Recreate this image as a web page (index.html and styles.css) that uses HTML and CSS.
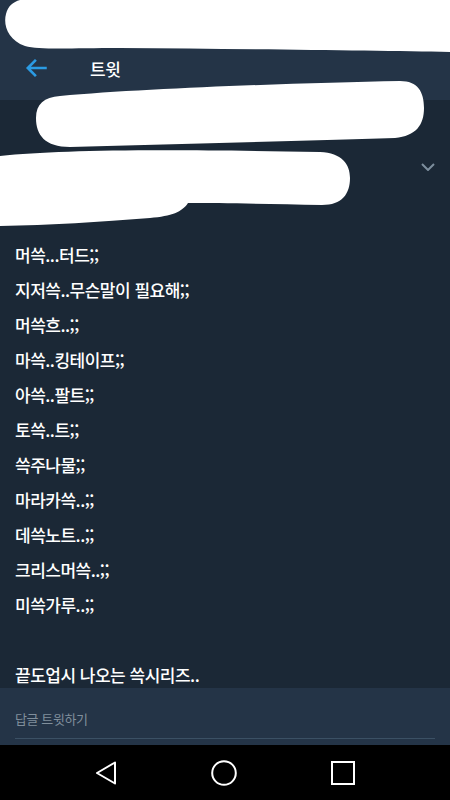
FILE: index.html
```html
<!DOCTYPE html>
<html lang="ko">
<head>
<meta charset="utf-8">
<title>트윗</title>
<link rel="stylesheet" href="styles.css">
</head>
<body>
<div class="screen">
  <header class="header">
    <div class="toolbar">
      <svg class="back" viewBox="0 0 24 24" width="26" height="26"><path d="M21 12H4M11 4.5L3.5 12 11 19.5" fill="none" stroke="#2b9be3" stroke-width="2.4" stroke-linecap="butt"/></svg>
      <span class="title">트윗</span>
    </div>
  </header>
  <main class="tweet">
    <div class="profile">
      <svg class="chevron" viewBox="0 0 14 8" width="14" height="8"><path d="M1 1l6 6 6-6" fill="none" stroke="#7d8e9d" stroke-width="2"/></svg>
    </div>
    <div class="text">
      <p class="line">머쓱...터드;;</p>
      <p class="line">지저쓱..무슨말이 필요해;;</p>
      <p class="line">머쓱흐..;;</p>
      <p class="line">마쓱..킹테이프;;</p>
      <p class="line">아쓱..팔트;;</p>
      <p class="line">토쓱..트;;</p>
      <p class="line">쓱주나물;;</p>
      <p class="line">마라카쓱..;;</p>
      <p class="line">데쓱노트..;;</p>
      <p class="line">크리스머쓱..;;</p>
      <p class="line">미쓱가루..;;</p>
      <p class="line"></p>
      <p class="line">끝도업시 나오는 쓱시리즈..</p>
    </div>
  </main>
  <div class="reply">
    <div class="reply-field">답글 트윗하기</div>
  </div>
  <nav class="navbar">
    <svg viewBox="0 0 24 26" width="24" height="26"><path d="M21 2.5L3 13l18 10.5z" fill="none" stroke="#fff" stroke-width="2" stroke-linejoin="round"/></svg>
    <svg viewBox="0 0 26 26" width="26" height="26"><circle cx="13" cy="13" r="11.8" fill="none" stroke="#fff" stroke-width="2"/></svg>
    <svg viewBox="0 0 26 26" width="26" height="26"><rect x="2" y="2" width="22" height="22" fill="none" stroke="#fff" stroke-width="2"/></svg>
  </nav>
  <svg class="scribble" viewBox="0 0 450 800" width="450" height="800">
    <path d="M20 0 H450 V52 C380 51 250 49 120 48 C70 48 40 50 25 46 C8 40 3 25 6 14 C8 6 13 2 20 0Z" fill="#fff"/>
    <path d="M60 96 C150 88 300 83 400 81 C418 81 424 92 424 108 C424 125 416 136 395 138 C300 141 180 144 70 147 C45 147 36 135 36 118 C36 104 44 97 60 96Z" fill="#fff"/>
    <path d="M0 156 C60 150 150 149 320 152 C342 153 350 164 350 178 C350 194 342 205 322 205 C270 204 220 203 188 203 C182 212 172 216 150 218 C100 222 50 225 0 226Z" fill="#fff"/>
  </svg>
</div>
</body>
</html>
```

FILE: styles.css
```css
* { box-sizing: border-box; margin: 0; padding: 0; }
html, body { width: 450px; height: 800px; overflow: hidden; background: #000; }
body { font-family: "Noto Sans CJK KR", "Noto Sans", sans-serif; }
.screen {
  position: relative;
  width: 450px;
  height: 800px;
  display: flex;
  flex-direction: column;
  background: #1b2836;
}
.header {
  height: 100px;
  background: #243447;
  padding-top: 44px;
}
.toolbar {
  height: 48px;
  display: flex;
  align-items: center;
  padding-left: 24px;
}
.back { flex: none; }
.title {
  margin-left: 40px;
  color: #fff;
  font-size: 17px;
  font-weight: 500;
  letter-spacing: -0.5px;
}
.tweet {
  flex: 1;
  overflow: hidden;
  background: #1b2836;
}
.profile {
  height: 137px;
  display: flex;
  justify-content: flex-end;
  padding-top: 63px;
  padding-right: 15px;
}
.chevron { flex: none; }
.text { padding: 0 15px; }
.line {
  height: 35px;
  line-height: 35px;
  color: #fff;
  font-size: 17px;
  font-weight: 500;
  letter-spacing: -0.5px;
  white-space: nowrap;
}
.reply {
  height: 57px;
  background: #243447;
  padding: 0 15px;
  display: flex;
}
.reply-field {
  flex: 1;
  height: 51px;
  border-bottom: 1px solid #3b5064;
  color: #808f9c;
  font-size: 13px;
  letter-spacing: -0.4px;
  padding-top: 22px;
  line-height: 18px;
}
.navbar {
  height: 55px;
  background: #000;
  display: flex;
  align-items: center;
  gap: 93px;
  padding-left: 94px;
}
.scribble {
  position: absolute;
  left: 0;
  top: 0;
  pointer-events: none;
}
```
